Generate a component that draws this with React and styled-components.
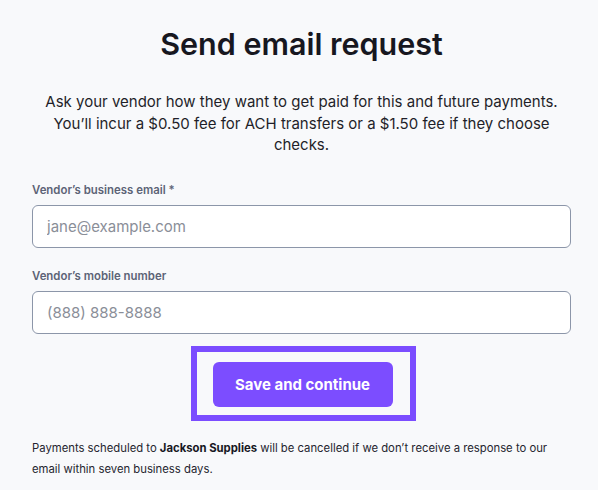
import React from "react";
import styled, { createGlobalStyle } from "styled-components";

const Global = createGlobalStyle`
  html, body { margin: 0; padding: 0; background: #f8f9fb; }
  body { font-family: Inter, "Noto Sans", sans-serif; }
  * { box-sizing: border-box; }
`;

const Page = styled.div`
  width: 598px;
  padding: 0 27px 0 32px;
  display: flex;
  flex-direction: column;
  align-items: stretch;
`;

const Title = styled.h1`
  margin: 26px 0 0;
  font-size: 30.5px;
  line-height: 36px;
  font-weight: 600;
  color: #17171f;
  text-align: center;
  letter-spacing: 0;
`;

const Intro = styled.p`
  margin: 29px 0 0;
  font-size: 15px;
  line-height: 21.5px;
  color: #1f1f29;
  text-align: center;
`;

const Field = styled.div`
  display: flex;
  flex-direction: column;
  gap: 8px;
  margin-top: ${(p) => p.$top}px;
`;

const Label = styled.label`
  font-size: 11.4px;
  line-height: 14px;
  font-weight: 600;
  color: #5c6376;
`;

const Input = styled.input`
  width: 100%;
  height: 43px;
  border: 1px solid #8c96a9;
  border-radius: 6px;
  background: #ffffff;
  padding: 0 14px;
  font-family: inherit;
  font-size: 15px;
  color: #1f1f29;
  outline: none;
  &::placeholder { color: #8a8e98; }
`;

const ButtonRow = styled.div`
  display: flex;
  justify-content: center;
  margin-top: 12px;
  padding-left: 3px;
`;

const FocusRing = styled.div`
  border: 6px solid #7b4dff;
  padding: 10px 17px 8px 16px;
`;

const Button = styled.button`
  width: 180px;
  height: 45px;
  border: none;
  border-radius: 6px;
  background: #7c4dff;
  color: #ffffff;
  font-family: inherit;
  font-size: 15px;
  font-weight: 700;
  cursor: pointer;
`;

const Note = styled.p`
  margin: 17px 0 0;
  font-size: 11.3px;
  line-height: 21px;
  color: #25252f;
  b { font-weight: 700; color: #17171f; }
`;

export default function App() {
  return (
    <>
      <Global />
      <Page>
        <Title>Send email request</Title>
        <Intro>
          Ask your vendor how they want to get paid for this and future payments.
          <br />
          You’ll incur a $0.50 fee for ACH transfers or a $1.50 fee if they choose
          <br />
          checks.
        </Intro>
        <Field $top={27}>
          <Label>Vendor’s business email *</Label>
          <Input type="email" placeholder="jane@example.com" />
        </Field>
        <Field $top={21}>
          <Label>Vendor’s mobile number</Label>
          <Input type="tel" placeholder="(888) 888-8888" />
        </Field>
        <ButtonRow>
          <FocusRing>
            <Button>Save and continue</Button>
          </FocusRing>
        </ButtonRow>
        <Note>
          Payments scheduled to <b>Jackson Supplies</b> will be cancelled if we don’t receive a response to our email within seven business days.
        </Note>
      </Page>
    </>
  );
}
